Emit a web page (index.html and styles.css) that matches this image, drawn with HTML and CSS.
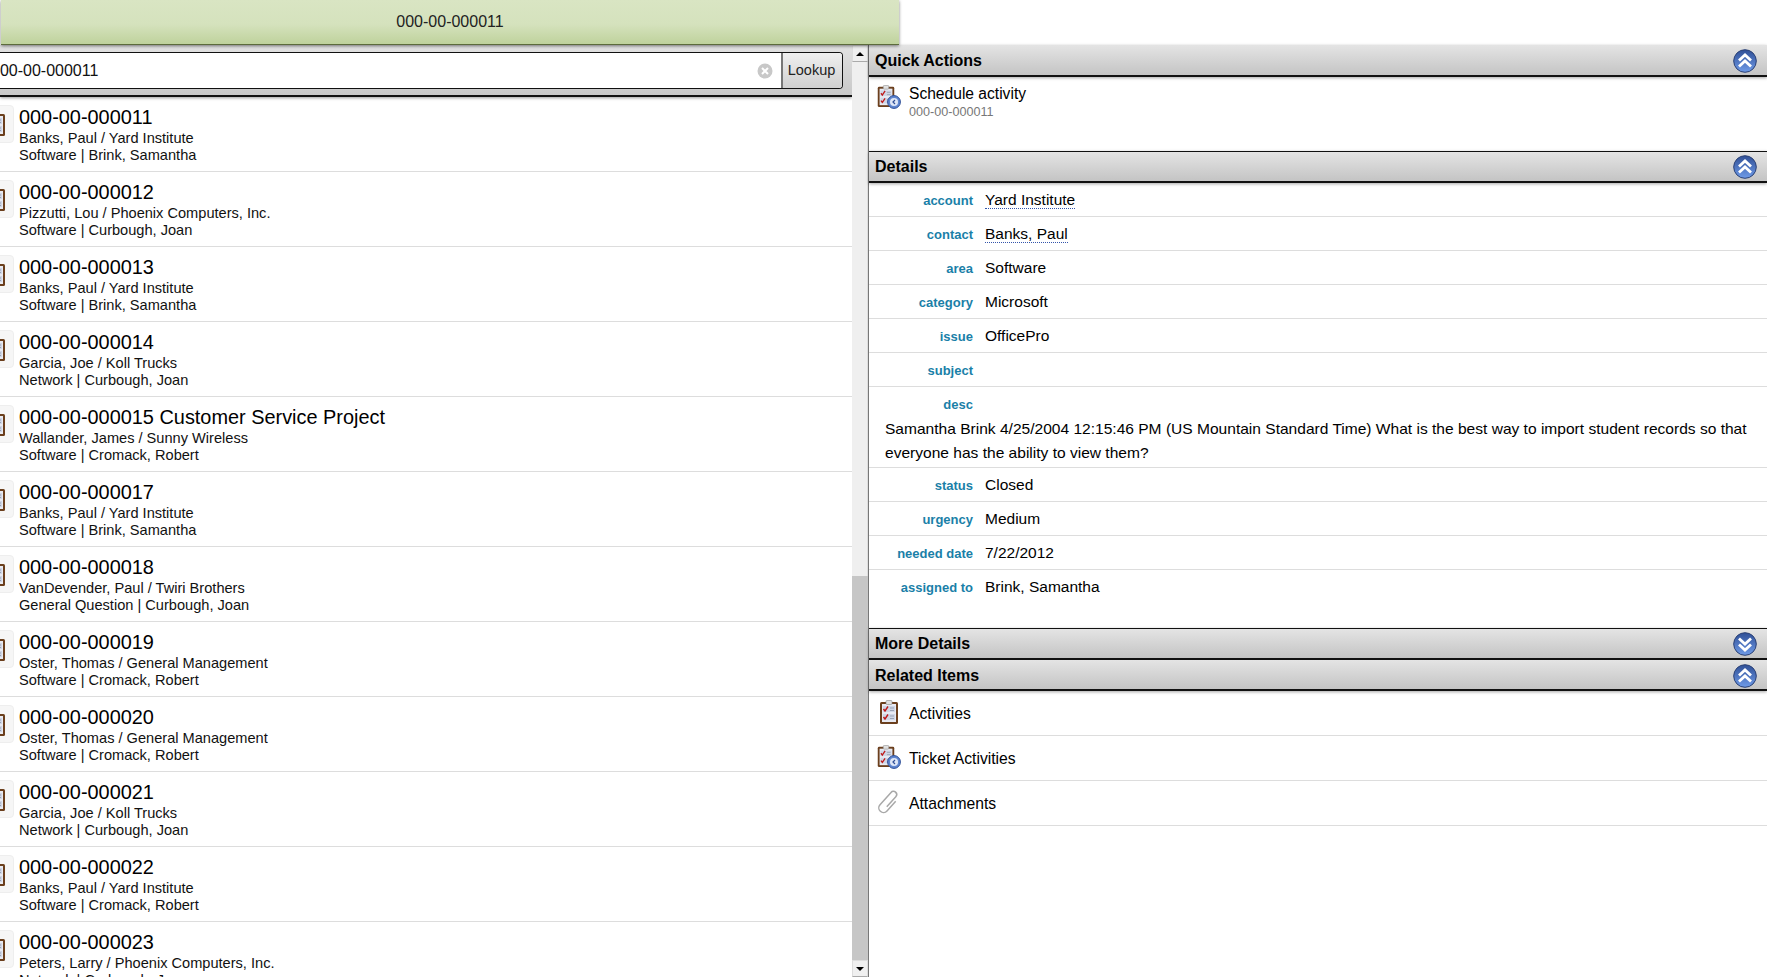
FILE: index.html
```html
<!DOCTYPE html>
<html lang="en">
<head>
    <meta charset="UTF-8">
    <title>000-00-000011</title>
    <link rel="stylesheet" href="styles.css">
</head>
<body>
    <svg class="defs" width="0" height="0">
        <defs>
            <linearGradient id="blue" x1="0" y1="0" x2="0" y2="1">
                <stop offset="0" stop-color="#2f4f96"/>
                <stop offset="1" stop-color="#6f9be8"/>
            </linearGradient>
            <symbol id="ico-up" viewBox="0 0 24 24">
                <circle cx="12" cy="12" r="11.3" fill="url(#blue)" stroke="#2b4175" stroke-width="1"/>
                <path d="M6 11.5 12 6 18 11.5M6 17.5 12 12 18 17.5" fill="none" stroke="#fff" stroke-width="2.8"/>
            </symbol>
            <symbol id="ico-down" viewBox="0 0 24 24">
                <circle cx="12" cy="12" r="11.3" fill="url(#blue)" stroke="#2b4175" stroke-width="1"/>
                <path d="M6 6.5 12 12 18 6.5M6 12.5 12 18 18 12.5" fill="none" stroke="#fff" stroke-width="2.8"/>
            </symbol>
            <symbol id="ico-board" viewBox="0 0 18 24">
                <rect x="0" y="2" width="18" height="22" rx="1.5" fill="#6b3f1d"/>
                <rect x="2" y="4" width="14" height="18" fill="#e8eaf2"/>
                <rect x="6" y="0.5" width="6" height="4" rx="1" fill="#e0e0e0" stroke="#888" stroke-width="0.6"/>
                <rect x="3" y="6" width="12" height="6" fill="#cfd6e6"/>
                <rect x="3" y="14" width="12" height="6" fill="#cfd6e6"/>
                <path d="M3.5 9 5 11 8 6.5M3.5 17 5 19 8 14.5" fill="none" stroke="#c01818" stroke-width="1.4"/>
                <path d="M10 8h4M10 10.5h4M10 16h4M10 18.5h4" stroke="#9aa3b5" stroke-width="1"/>
            </symbol>
            <symbol id="ico-sched" viewBox="0 0 24 24">
                <use href="#ico-board" x="0" y="0" width="18" height="22"/>
                <circle cx="17" cy="17" r="6.4" fill="#5f86d0" stroke="#2f4f96"/>
                <circle cx="17" cy="17" r="4" fill="#dfe7f7"/>
                <path d="M18 15 16 17 18 19" fill="none" stroke="#2f4f96" stroke-width="1.2"/>
            </symbol>
        </defs>
    </svg>

    <div class="title-bar">000-00-000011</div>

    <div class="main">
        <div class="left-pane">
            <div class="list-col">
                <div class="search-bar">
                    <div class="search-box">
                        <span class="search-text">000-00-000011</span>
                        <span class="clear-btn">
                            <svg width="16" height="16" viewBox="0 0 16 16"><circle cx="8" cy="8" r="7.5" fill="#c8c8c8"/><path d="M5 5 11 11M11 5 5 11" stroke="#fff" stroke-width="2"/></svg>
                        </span>
                        <span class="lookup-btn">Lookup</span>
                    </div>
                </div>
                <ul class="ticket-list">
                    <li>
                        <span class="tk-icon"><svg width="18" height="24"><use href="#ico-board"/></svg></span>
                        <div>
                            <div class="tk-title">000-00-000011</div>
                            <div class="tk-line">Banks, Paul / Yard Institute</div>
                            <div class="tk-line">Software | Brink, Samantha</div>
                        </div>
                    </li>
                    <li>
                        <span class="tk-icon"><svg width="18" height="24"><use href="#ico-board"/></svg></span>
                        <div>
                            <div class="tk-title">000-00-000012</div>
                            <div class="tk-line">Pizzutti, Lou / Phoenix Computers, Inc.</div>
                            <div class="tk-line">Software | Curbough, Joan</div>
                        </div>
                    </li>
                    <li>
                        <span class="tk-icon"><svg width="18" height="24"><use href="#ico-board"/></svg></span>
                        <div>
                            <div class="tk-title">000-00-000013</div>
                            <div class="tk-line">Banks, Paul / Yard Institute</div>
                            <div class="tk-line">Software | Brink, Samantha</div>
                        </div>
                    </li>
                    <li>
                        <span class="tk-icon"><svg width="18" height="24"><use href="#ico-board"/></svg></span>
                        <div>
                            <div class="tk-title">000-00-000014</div>
                            <div class="tk-line">Garcia, Joe / Koll Trucks</div>
                            <div class="tk-line">Network | Curbough, Joan</div>
                        </div>
                    </li>
                    <li>
                        <span class="tk-icon"><svg width="18" height="24"><use href="#ico-board"/></svg></span>
                        <div>
                            <div class="tk-title">000-00-000015 Customer Service Project</div>
                            <div class="tk-line">Wallander, James / Sunny Wireless</div>
                            <div class="tk-line">Software | Cromack, Robert</div>
                        </div>
                    </li>
                    <li>
                        <span class="tk-icon"><svg width="18" height="24"><use href="#ico-board"/></svg></span>
                        <div>
                            <div class="tk-title">000-00-000017</div>
                            <div class="tk-line">Banks, Paul / Yard Institute</div>
                            <div class="tk-line">Software | Brink, Samantha</div>
                        </div>
                    </li>
                    <li>
                        <span class="tk-icon"><svg width="18" height="24"><use href="#ico-board"/></svg></span>
                        <div>
                            <div class="tk-title">000-00-000018</div>
                            <div class="tk-line">VanDevender, Paul / Twiri Brothers</div>
                            <div class="tk-line">General Question | Curbough, Joan</div>
                        </div>
                    </li>
                    <li>
                        <span class="tk-icon"><svg width="18" height="24"><use href="#ico-board"/></svg></span>
                        <div>
                            <div class="tk-title">000-00-000019</div>
                            <div class="tk-line">Oster, Thomas / General Management</div>
                            <div class="tk-line">Software | Cromack, Robert</div>
                        </div>
                    </li>
                    <li>
                        <span class="tk-icon"><svg width="18" height="24"><use href="#ico-board"/></svg></span>
                        <div>
                            <div class="tk-title">000-00-000020</div>
                            <div class="tk-line">Oster, Thomas / General Management</div>
                            <div class="tk-line">Software | Cromack, Robert</div>
                        </div>
                    </li>
                    <li>
                        <span class="tk-icon"><svg width="18" height="24"><use href="#ico-board"/></svg></span>
                        <div>
                            <div class="tk-title">000-00-000021</div>
                            <div class="tk-line">Garcia, Joe / Koll Trucks</div>
                            <div class="tk-line">Network | Curbough, Joan</div>
                        </div>
                    </li>
                    <li>
                        <span class="tk-icon"><svg width="18" height="24"><use href="#ico-board"/></svg></span>
                        <div>
                            <div class="tk-title">000-00-000022</div>
                            <div class="tk-line">Banks, Paul / Yard Institute</div>
                            <div class="tk-line">Software | Cromack, Robert</div>
                        </div>
                    </li>
                    <li>
                        <span class="tk-icon"><svg width="18" height="24"><use href="#ico-board"/></svg></span>
                        <div>
                            <div class="tk-title">000-00-000023</div>
                            <div class="tk-line">Peters, Larry / Phoenix Computers, Inc.</div>
                            <div class="tk-line">Network | Curbough, Joan</div>
                        </div>
                    </li>
                </ul>
            </div>
            <div class="scroll-track">
                <div class="scroll-arrow"><span class="tri-up"></span></div>
                <div class="scroll-thumb"></div>
                <div class="scroll-rest"></div>
                <div class="scroll-arrow"><span class="tri-down"></span></div>
            </div>
        </div>

        <div class="right-pane">
            <h2 class="section-head section-flush">Quick Actions<svg class="toggle"><use href="#ico-up"/></svg></h2>
            <div class="quick-action">
                <svg width="24" height="24"><use href="#ico-sched"/></svg>
                <div>
                    <div class="qa-title">Schedule activity</div>
                    <div class="qa-sub">000-00-000011</div>
                </div>
            </div>

            <h2 class="section-head">Details<svg class="toggle"><use href="#ico-up"/></svg></h2>
            <div class="details">
                <div class="row"><label>account</label><span class="val"><a>Yard Institute</a></span></div>
                <div class="row"><label>contact</label><span class="val"><a>Banks, Paul</a></span></div>
                <div class="row"><label>area</label><span class="val">Software</span></div>
                <div class="row"><label>category</label><span class="val">Microsoft</span></div>
                <div class="row"><label>issue</label><span class="val">OfficePro</span></div>
                <div class="row"><label>subject</label><span class="val">&nbsp;</span></div>
                <div class="row row-desc">
                    <label>desc</label>
                    <p>Samantha Brink 4/25/2004 12:15:46 PM (US Mountain Standard Time) What is the best way to import student records so that everyone has the ability to view them?</p>
                </div>
                <div class="row"><label>status</label><span class="val">Closed</span></div>
                <div class="row"><label>urgency</label><span class="val">Medium</span></div>
                <div class="row"><label>needed date</label><span class="val">7/22/2012</span></div>
                <div class="row row-last"><label>assigned to</label><span class="val">Brink, Samantha</span></div>
            </div>

            <h2 class="section-head">More Details<svg class="toggle"><use href="#ico-down"/></svg></h2>
            <h2 class="section-head section-flush section-related">Related Items<svg class="toggle"><use href="#ico-up"/></svg></h2>
            <ul class="related">
                <li>
                    <span class="rel-ico"><svg width="18" height="24"><use href="#ico-board"/></svg></span>
                    Activities
                </li>
                <li>
                    <span class="rel-ico"><svg width="24" height="24"><use href="#ico-sched"/></svg></span>
                    Ticket Activities
                </li>
                <li>
                    <span class="rel-ico">
                        <svg width="24" height="24" viewBox="0 0 24 24">
                            <path transform="rotate(42 12 12)" d="M16.5 7v13a4.7 4.7 0 0 1-9.4 0V3.5a3.2 3.2 0 0 1 6.4 0V17" fill="none" stroke="#a8a8a8" stroke-width="1.5"/>
                        </svg>
                    </span>
                    Attachments
                </li>
            </ul>
        </div>
    </div>
</body>
</html>
```

FILE: styles.css
```css
* {
    box-sizing: border-box;
}
html, body {
    margin: 0;
    padding: 0;
    height: 100%;
    overflow: hidden;
}
body {
    font-family: "Liberation Sans", Arial, sans-serif;
    color: #000;
    background: #fff;
}
.defs {
    position: absolute;
}
.title-bar {
    width: 898px;
    height: 45px;
    margin-left: 1px;
    line-height: 43px;
    text-align: center;
    font-size: 16px;
    color: #222;
    background: linear-gradient(to bottom, #d9e5c3, #d5e2bd 55%, #bfd29c);
    border-bottom: 1px solid #5c6b3c;
    box-shadow: 0 1px 3px rgba(0,0,0,0.5);
    position: relative;
    z-index: 2;
}
.main {
    display: flex;
    height: 932px;
}
.left-pane {
    width: 869px;
    display: flex;
    flex: none;
    border-right: 1px solid #777;
}
.list-col {
    width: 852px;
    overflow: hidden;
}
.search-bar {
    height: 52px;
    padding: 7px 9px 7px 0;
    background: linear-gradient(to bottom, #e2e2e2, #c8c8c8);
    border-bottom: 2px solid #111;
    box-shadow: 0 1px 3px rgba(0,0,0,0.4);
    position: relative;
}
.search-box {
    display: flex;
    align-items: center;
    height: 37px;
    background: #fff;
    border: 1px solid #111;
    border-left: none;
    border-radius: 0 4px 4px 0;
}
.search-text {
    flex: 1;
    font-size: 16px;
    color: #111;
    margin-left: -9px;
}
.clear-btn {
    display: flex;
    margin-right: 8px;
}
.lookup-btn {
    width: 61px;
    height: 100%;
    padding-right: 2px;
    line-height: 35px;
    text-align: center;
    font-size: 14.5px;
    color: #222;
    border-left: 2px solid #777;
    border-radius: 0 3px 3px 0;
    background: linear-gradient(to bottom, #efefef, #d0d0d0);
}
.ticket-list {
    list-style: none;
    margin: 0;
    padding: 0;
}
.ticket-list li {
    display: flex;
    gap: 5px;
    height: 75px;
    padding-top: 8px;
    border-bottom: 1px solid #ddd;
}
.tk-icon {
    width: 20px;
    height: 38px;
    margin-left: -6px;
    flex: none;
    display: flex;
    align-items: center;
    justify-content: flex-end;
    padding-right: 8px;
    overflow: hidden;
    background: #f6f6f6;
    border: 1px solid #eee;
    border-radius: 4px;
}
.tk-icon svg {
    flex: none;
}
.tk-title {
    font-size: 19.9px;
    line-height: 23px;
    margin-top: 1px;
    margin-bottom: 1px;
}
.tk-line {
    font-size: 14.6px;
    line-height: 17px;
    color: #111;
}
.scroll-track {
    width: 16px;
    display: flex;
    flex-direction: column;
    background: #c6c6c6;
}
.scroll-arrow {
    height: 17px;
    flex: none;
    display: flex;
    align-items: center;
    justify-content: center;
    background: #f0f0f0;
    border: 1px solid #ddd;
    border-bottom-color: #aaa;
}
.tri-up {
    border: 4px solid transparent;
    border-top: none;
    border-bottom: 4px solid #000;
}
.tri-down {
    border: 4px solid transparent;
    border-bottom: none;
    border-top: 4px solid #000;
}
.scroll-thumb {
    height: 514px;
    flex: none;
    background: #efefef;
    border-right: 1px solid #ddd;
}
.scroll-rest {
    flex: 1;
}
.right-pane {
    flex: 1;
    min-width: 0;
}
.section-head {
    display: flex;
    align-items: center;
    justify-content: space-between;
    height: 32px;
    margin: 0;
    padding: 1px 10px 0 6px;
    font-size: 16px;
    font-weight: bold;
    color: #000;
    background: linear-gradient(to bottom, #e4e4e4, #c4c4c4);
    border-top: 1px solid #111;
    border-bottom: 2px solid #111;
    box-shadow: 0 1px 3px rgba(0,0,0,0.35);
}
.section-flush {
    border-top: none;
    padding-top: 2px;
}
.section-related {
    height: 31px;
}
.toggle {
    width: 24px;
    height: 24px;
}
.quick-action {
    display: flex;
    height: 74px;
    padding: 8px 0 0 8px;
    gap: 8px;
}
.qa-title {
    font-size: 15.6px;
    line-height: 18px;
}
.qa-sub {
    font-size: 12.6px;
    line-height: 16px;
    margin-top: 1px;
    color: #777;
}
.row {
    display: flex;
    align-items: baseline;
    height: 34px;
    padding-top: 8px;
    border-bottom: 1px solid #ddd;
}
.row label {
    width: 104px;
    flex: none;
    text-align: right;
    font-size: 13px;
    font-weight: bold;
    color: #1a7fa8;
}
.val {
    margin-left: 12px;
    font-size: 15.5px;
}
.val a {
    border-bottom: 1px dotted #3355aa;
}
.row-desc {
    display: block;
    height: 81px;
    padding-top: 10px;
}
.row-desc label {
    display: block;
}
.row-desc p {
    margin: 5px 16px 0;
    font-size: 15.55px;
    line-height: 24px;
}
.row-last {
    height: 58px;
    border-bottom: none;
}
.related {
    list-style: none;
    margin: 0;
    padding: 0;
}
.related li {
    display: flex;
    align-items: center;
    height: 45px;
    padding-top: 1px;
    font-size: 15.7px;
    border-bottom: 1px solid #ddd;
}
.rel-ico {
    width: 40px;
    padding-bottom: 4px;
    display: flex;
    align-items: center;
    justify-content: center;
    flex: none;
}
```
